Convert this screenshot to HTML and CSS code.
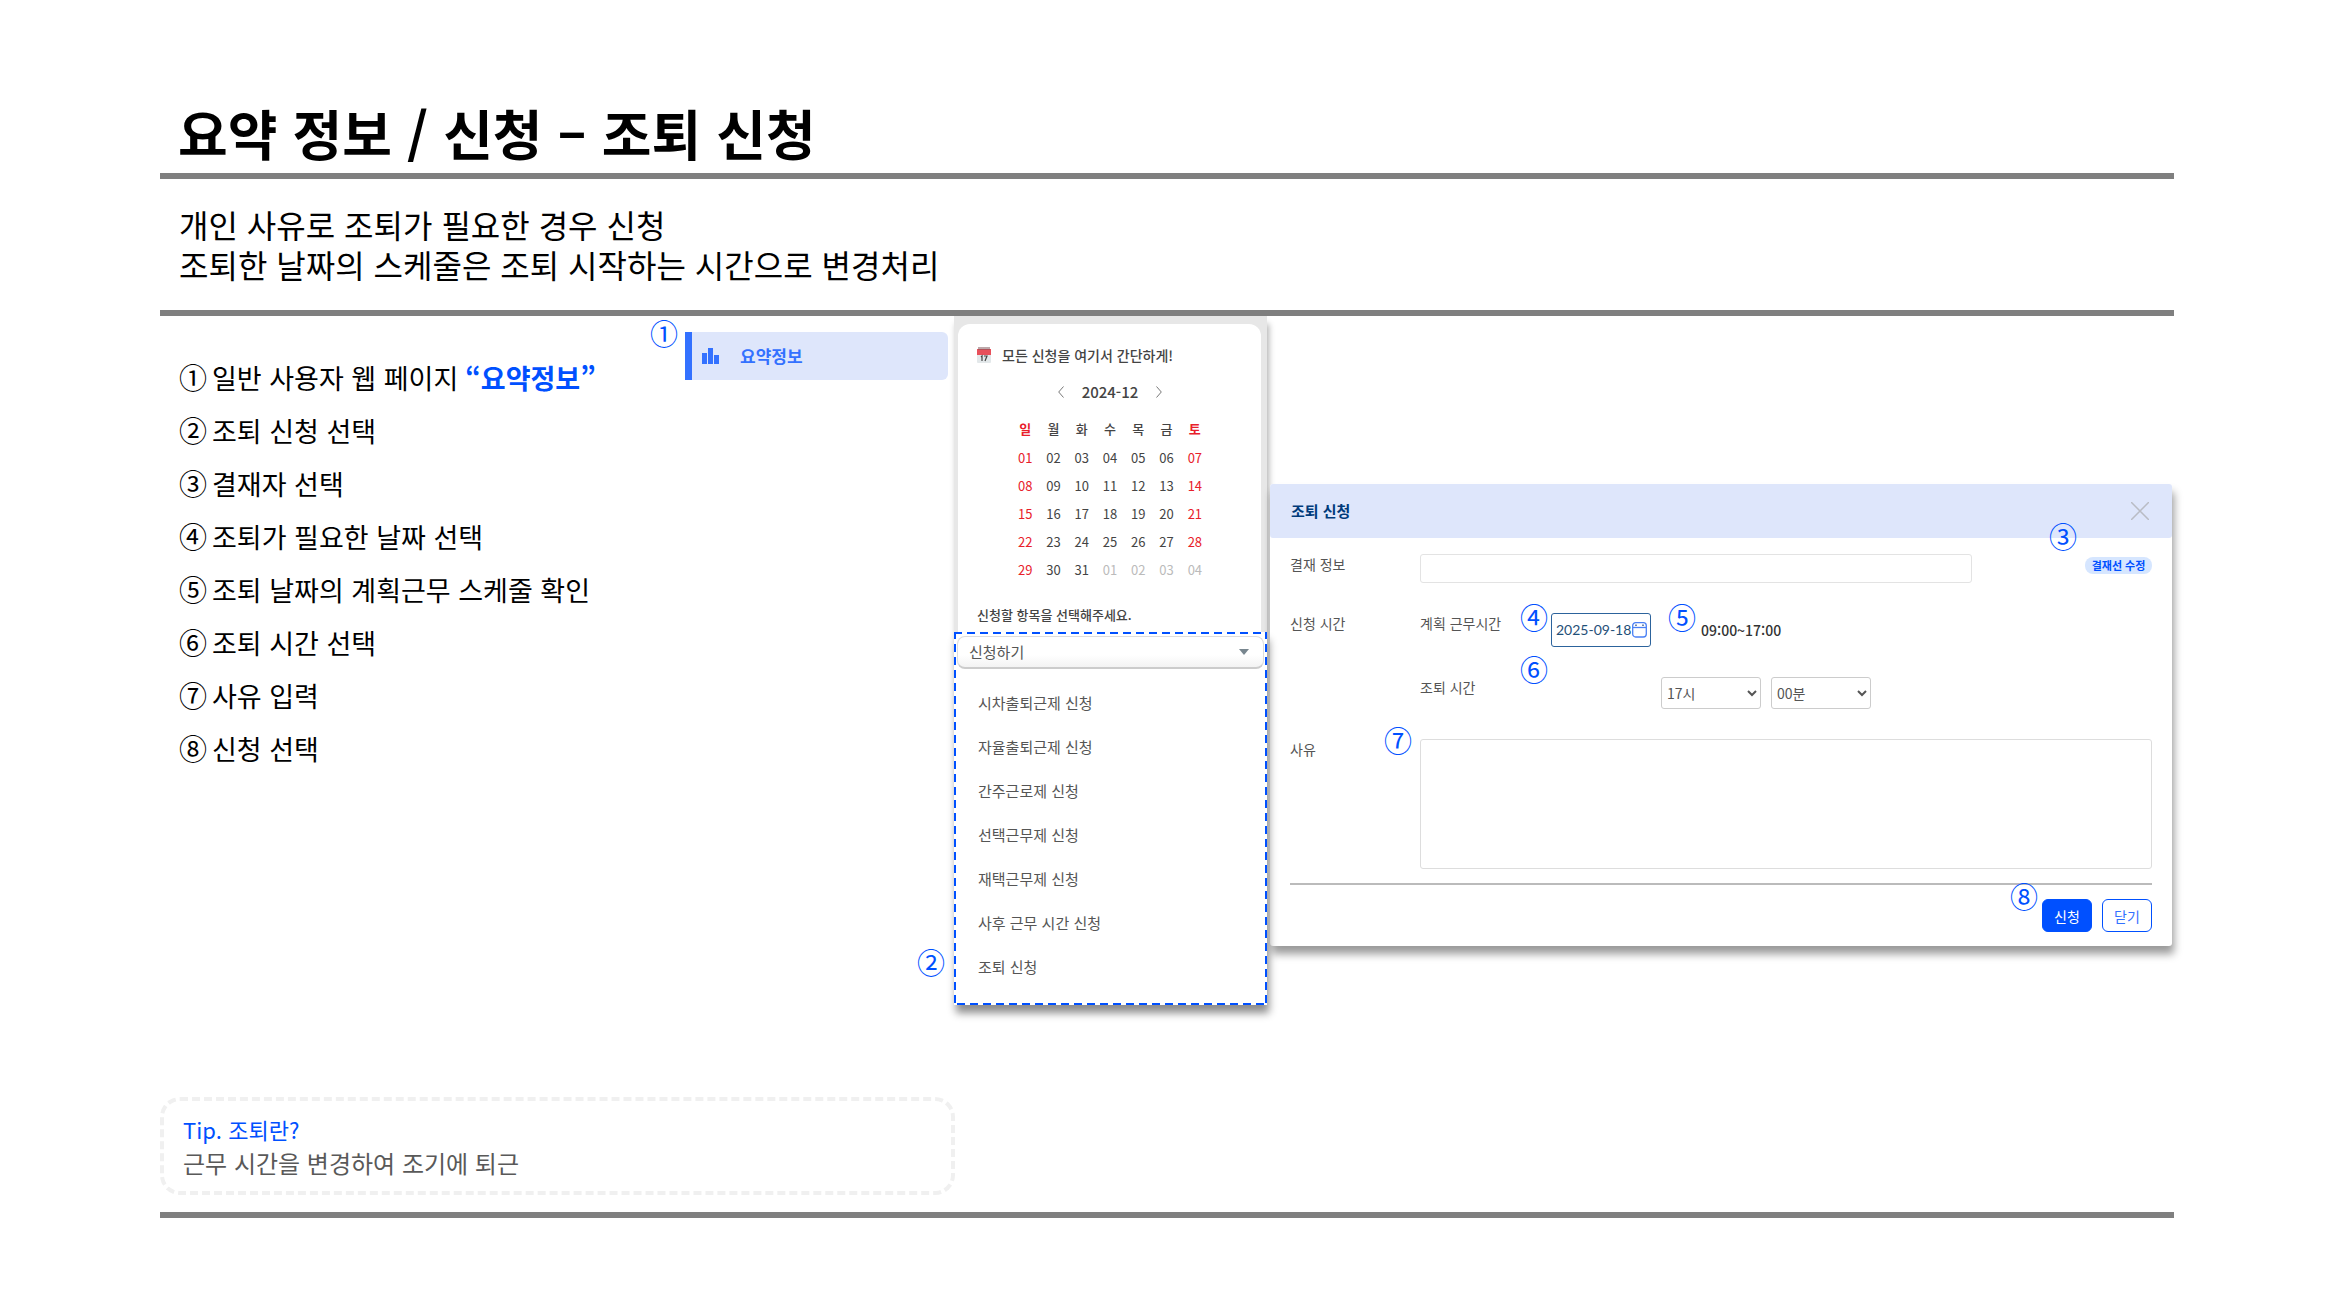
FILE: index.html
```html
<!DOCTYPE html>
<html lang="ko">
<head>
<meta charset="utf-8">
<meta name="viewport" content="width=device-width, initial-scale=1">
<title>요약 정보 / 신청 – 조퇴 신청</title>
<link rel="stylesheet" href="styles.css">
</head>
<body>
<main class="slide">
  <h1 class="title">요약 정보 / 신청 – 조퇴 신청</h1>
  <p class="intro">개인 사유로 조퇴가 필요한 경우 신청<br>조퇴한 날짜의 스케줄은 조퇴 시작하는 시간으로 변경처리</p>

  <section class="guide">
    <ul class="steps">
      <li><span class="num">①</span>일반 사용자 웹 페이지 <strong>“요약정보”</strong></li>
      <li><span class="num">②</span>조퇴 신청 선택</li>
      <li><span class="num">③</span>결재자 선택</li>
      <li><span class="num">④</span>조퇴가 필요한 날짜 선택</li>
      <li><span class="num">⑤</span>조퇴 날짜의 계획근무 스케줄 확인</li>
      <li><span class="num">⑥</span>조퇴 시간 선택</li>
      <li><span class="num">⑦</span>사유 입력</li>
      <li><span class="num">⑧</span>신청 선택</li>
    </ul>

    <nav class="side">
      <span class="mark mark-1">①</span>
      <a class="side-link" href="#summary">
        <svg width="18" height="16" viewBox="0 0 18 16" aria-hidden="true"><path d="M0 5h5v11H0zM6 0h5v16H6zM12 7h5v9h-5z" fill="#3371ff"/></svg>
        요약정보
      </a>
    </nav>

    <div class="panel" id="summary">
      <div class="backdrop">
        <div class="card">
          <h2 class="card-title">
            <svg width="14" height="16" viewBox="0 0 14 16" aria-hidden="true">
              <path d="M0 2h14v13a1 1 0 0 1-1 1H1a1 1 0 0 1-1-1z" fill="#e3e8ea"/>
              <path d="M0 2h14v6H0z" fill="#e8505b"/>
              <path d="M2 0v3M4 0v3M6 0v3M8 0v3M10 0v3M12 0v3" stroke="#7b5257" stroke-width="1"/>
              <path d="M4 10l1-1v5M7 9h3l-2 5" fill="none" stroke="#444" stroke-width="1.2"/>
            </svg>
            모든 신청을 여기서 간단하게!
          </h2>
          <div class="month">
            <button type="button" aria-label="이전 달"><svg width="6" height="12" viewBox="0 0 6 12"><path d="M5.500.5L.7 6l4.800 5.500" fill="none" stroke="#777"/></svg></button>
            <span>2024-12</span>
            <button type="button" aria-label="다음 달"><svg width="6" height="12" viewBox="0 0 6 12"><path d="M.5.5L5.300 6 .5 11.500" fill="none" stroke="#777"/></svg></button>
          </div>
          <table class="days">
            <thead><tr><th>일</th><th>월</th><th>화</th><th>수</th><th>목</th><th>금</th><th>토</th></tr></thead>
            <tbody>
              <tr><td>01</td><td>02</td><td>03</td><td>04</td><td>05</td><td>06</td><td>07</td></tr>
              <tr><td>08</td><td>09</td><td>10</td><td>11</td><td>12</td><td>13</td><td>14</td></tr>
              <tr><td>15</td><td>16</td><td>17</td><td>18</td><td>19</td><td>20</td><td>21</td></tr>
              <tr><td>22</td><td>23</td><td>24</td><td>25</td><td>26</td><td>27</td><td>28</td></tr>
              <tr><td>29</td><td>30</td><td>31</td><td class="out">01</td><td class="out">02</td><td class="out">03</td><td class="out">04</td></tr>
            </tbody>
          </table>
          <p class="hint">신청할 항목을 선택해주세요.</p>
        </div>
      </div>
      <div class="picker">
        <button type="button" class="picker-head">신청하기
          <svg width="10" height="6" viewBox="0 0 10 6" aria-hidden="true"><path d="M0 0h10L5 6z" fill="#78868f"/></svg>
        </button>
        <ul class="picker-list">
          <li><a href="#r1">시차출퇴근제 신청</a></li>
          <li><a href="#r2">자율출퇴근제 신청</a></li>
          <li><a href="#r3">간주근로제 신청</a></li>
          <li><a href="#r4">선택근무제 신청</a></li>
          <li><a href="#r5">재택근무제 신청</a></li>
          <li><a href="#r6">사후 근무 시간 신청</a></li>
          <li><a href="#r7">조퇴 신청</a></li>
        </ul>
        <svg class="outline" aria-hidden="true"><rect width="100%" height="100%" fill="none" stroke="#0050ff" stroke-width="4" stroke-dasharray="8 5"/></svg>
        <span class="mark mark-2">②</span>
      </div>
    </div>

    <form class="dialog">
      <header class="dialog-head">
        <h2>조퇴 신청</h2>
        <button type="button" class="close" aria-label="창 닫기"><svg width="18" height="18" viewBox="0 0 18 18"><path d="M0 0l18 18M18 0L0 18" stroke="#b9bcc4" stroke-width="1.500"/></svg></button>
      </header>
      <div class="fields">
        <label for="line">결재 정보</label>
        <div class="row approval">
          <input id="line" type="text">
          <button type="button" class="pill">결재선 수정<span class="mark mark-3">③</span></button>
        </div>

        <span>신청 시간</span>
        <div class="row">
          <label class="sub" for="date">계획 근무시간</label>
          <div class="date">
            <input id="date" type="text" value="2025-09-18">
            <svg width="15" height="16" viewBox="0 0 15 16" aria-hidden="true"><rect x=".7" y=".7" width="13.600" height="14.300" rx="3" fill="none" stroke="#4a80f5" stroke-width="1.300"/><path d="M1 5.500h13" stroke="#4a80f5" stroke-width="1.300"/><path d="M4 2.500v1.500M11 2.500v1.500" stroke="#123a70" stroke-width="1.200"/></svg>
            <span class="mark mark-4">④</span>
          </div>
          <strong class="plan">09:00~17:00<span class="mark mark-5">⑤</span></strong>
        </div>

        <div class="row leave">
          <label class="sub" for="hour">조퇴 시간<span class="mark mark-6">⑥</span></label>
          <select id="hour"><option>17시</option></select>
          <select aria-label="분"><option>00분</option></select>
        </div>

        <label for="reason">사유</label>
        <div class="row">
          <textarea id="reason"></textarea>
          <span class="mark mark-7">⑦</span>
        </div>
      </div>
      <footer class="actions">
        <button type="submit" class="primary">신청<span class="mark mark-8">⑧</span></button>
        <button type="button" class="secondary">닫기</button>
      </footer>
    </form>
  </section>

  <aside class="tip">
    <h2>Tip. 조퇴란?</h2>
    <p>근무 시간을 변경하여 조기에 퇴근</p>
  </aside>
</main>
</body>
</html>
```
FILE: styles.css
```css
* {
  box-sizing: border-box;
  margin: 0;
  padding: 0;
}

body {
  background: #fff;
  color: #000;
  font: 14px/20px "Noto Sans CJK KR", sans-serif;
}

button,
input,
select,
textarea {
  font: inherit;
  color: inherit;
  background: none;
  border: 0;
}

ul {
  list-style: none;
}

a {
  color: inherit;
  text-decoration: none;
}

svg {
  display: block;
}

.slide {
  padding: 93px 160px 95px;
}

.title {
  padding-left: 18px;
  border-bottom: 6px solid #7f7f7f;
  font-size: 54px;
  line-height: 80px;
}

.intro {
  padding: 25px 19px 26px;
  border-bottom: 6px solid #7f7f7f;
  font-size: 32px;
  line-height: 40px;
}

.guide {
  display: grid;
  grid-template-columns: 525fr 269fr 313px 905fr;
  align-items: start;
  padding-right: 2px;
}

/* numbered instructions */
.steps {
  padding: 35px 0 0 19px;
  font-size: 27px;
  line-height: 53px;
}

.steps li {
  display: flex;
  gap: 5px;
  white-space: nowrap;
}

.steps strong {
  margin-left: 2px;
  color: #0050ff;
}

.num {
  width: 28px;
  font-size: 28px;
}

/* blue callout numbers laid over the screens */
.mark {
  position: absolute;
  width: 28px;
  color: #0050ff;
  font-size: 28px;
  font-weight: 400;
  line-height: 28px;
}

.mark-1 { left: -35px; top: -13px; }
.mark-2 { left: -37px; bottom: 29px; }
.mark-3 { left: -36px; top: -35px; }
.mark-4 { left: -32px; top: -11px; }
.mark-5 { left: -33px; top: -10px; }
.mark-6 { left: 100px; top: -22px; }
.mark-7 { left: -36px; top: -13px; }
.mark-8 { left: -33px; top: -18px; }

/* side menu entry */
.side {
  position: relative;
  margin: 16px 6px 0 0;
}

.side-link {
  display: flex;
  align-items: center;
  gap: 20px;
  height: 48px;
  padding-left: 10px;
  border-left: 7px solid #3371ff;
  border-radius: 0 6px 6px 0;
  background: #dee6fb;
  color: #3371ff;
  font-size: 17px;
  font-weight: 700;
}

/* calendar */
.backdrop {
  padding: 8px 6px 0 4px;
  background: #e7e7e7;
  box-shadow: 2px 8px 6px rgba(0, 0, 0, 0.3);
}

.card {
  height: 308px;
  padding: 18px 18px 0 19px;
  border-radius: 12px 12px 0 0;
  background: #fff;
  color: #444;
}

.card-title {
  display: flex;
  align-items: center;
  gap: 11px;
  font-size: 14px;
  font-weight: 500;
  line-height: 26px;
}

.month {
  display: flex;
  justify-content: center;
  align-items: center;
  gap: 18px;
  height: 42px;
  margin-top: 3px;
  font-size: 15px;
  font-weight: 500;
}

.days {
  width: 198px;
  margin: 0 auto;
  border-collapse: collapse;
  table-layout: fixed;
  font-size: 13px;
  text-align: center;
}

.days th {
  height: 31px;
  font-weight: 500;
}

.days td {
  height: 28px;
}

.days th:first-child,
.days th:last-child {
  color: #e8202a;
  font-weight: 700;
}

.days td:first-child,
.days td:last-child {
  color: #e8202a;
}

.days td.out {
  color: #bbb;
}

.hint {
  padding-top: 21px;
  font-size: 13px;
  font-weight: 500;
}

/* request type list */
.picker {
  position: relative;
  padding: 4px 3px 6px;
  background: #fff;
  box-shadow: 2px 8px 8px rgba(0, 0, 0, 0.45);
  color: #555;
  font-size: 15px;
}

.picker-head {
  display: flex;
  justify-content: space-between;
  align-items: center;
  width: 100%;
  height: 33px;
  padding: 0 14px 0 11px;
  border: 1px solid #ddd;
  border-bottom: 2px solid #ccc;
  border-radius: 8px;
  background: linear-gradient(#fff 60%, #f3f3f3);
}

.picker-list {
  padding: 12px 21px 10px;
  line-height: 44px;
}

.outline {
  position: absolute;
  inset: 0;
  width: 100%;
  height: 100%;
}

/* early leave dialog */
.dialog {
  margin: 168px 0 0 3px;
  border-radius: 3px;
  background: #fff;
  box-shadow: 2px 8px 8px rgba(0, 0, 0, 0.4);
  color: #555;
}

.dialog-head {
  display: flex;
  justify-content: space-between;
  align-items: center;
  height: 54px;
  padding: 0 23px 0 21px;
  border-radius: 3px;
  background: #dee6fb;
}

.dialog-head h2 {
  color: #003b7a;
  font-size: 15px;
}

.fields {
  display: grid;
  grid-template-columns: 130px 1fr;
  row-gap: 30px;
  margin: 16px 20px 0;
}

.row {
  position: relative;
  display: flex;
  align-items: flex-start;
}

.approval {
  justify-content: space-between;
}

.approval input {
  width: 552px;
  height: 29px;
  border: 1px solid #e3e3e3;
  border-radius: 3px;
}

.pill {
  position: relative;
  width: 67px;
  height: 17px;
  margin-top: 3px;
  border-radius: 8px;
  background: #d6e6ff;
  color: #0050ff;
  font-size: 11px;
  font-weight: 700;
  line-height: 17px;
  white-space: nowrap;
}

.sub {
  position: relative;
  width: 131px;
}

.date {
  position: relative;
  display: flex;
  align-items: center;
  width: 100px;
  height: 34px;
  padding: 0 3px 0 4px;
  border: 1px solid #2c639c;
  border-radius: 3px;
}

.date input {
  width: 76px;
  color: #1f5078;
  font-family: Lato, sans-serif;
}

.date > svg {
  flex: none;
}

.plan {
  position: relative;
  margin-left: 50px;
  color: #333;
  font-weight: 500;
  line-height: 34px;
}

.leave {
  grid-column: 2;
}

.leave select {
  width: 100px;
  height: 32px;
  padding-left: 1px;
  border: 1px solid #ccc;
  border-radius: 3px;
}

.leave .sub {
  margin-right: 110px;
}

.leave select + select {
  margin-left: 10px;
}

textarea {
  width: 100%;
  height: 130px;
  border: 1px solid #ddd;
  border-radius: 3px;
  resize: none;
}

.actions {
  display: flex;
  justify-content: flex-end;
  gap: 10px;
  margin: 14px 20px 0;
  padding: 14px 0;
  border-top: 2px solid #bbb;
}

.actions button {
  position: relative;
  width: 50px;
  height: 33px;
  border: 1px solid #0050ff;
  border-radius: 6px;
}

.primary {
  background: #0050ff;
  color: #fff;
}

.secondary {
  color: #3371ff;
}

/* tip */
.tip {
  width: 795px;
  max-width: 100%;
  margin-top: 92px;
  padding: 11px 19px;
  border: 4px dashed #f0f0f0;
  border-radius: 20px;
  color: #595959;
  font-size: 24px;
  line-height: 34px;
}

.tip h2 {
  color: #0050ff;
  font-size: 22px;
  font-weight: 400;
}

.slide::after {
  content: "";
  display: block;
  height: 6px;
  margin-top: 17px;
  background: #7f7f7f;
}
```
